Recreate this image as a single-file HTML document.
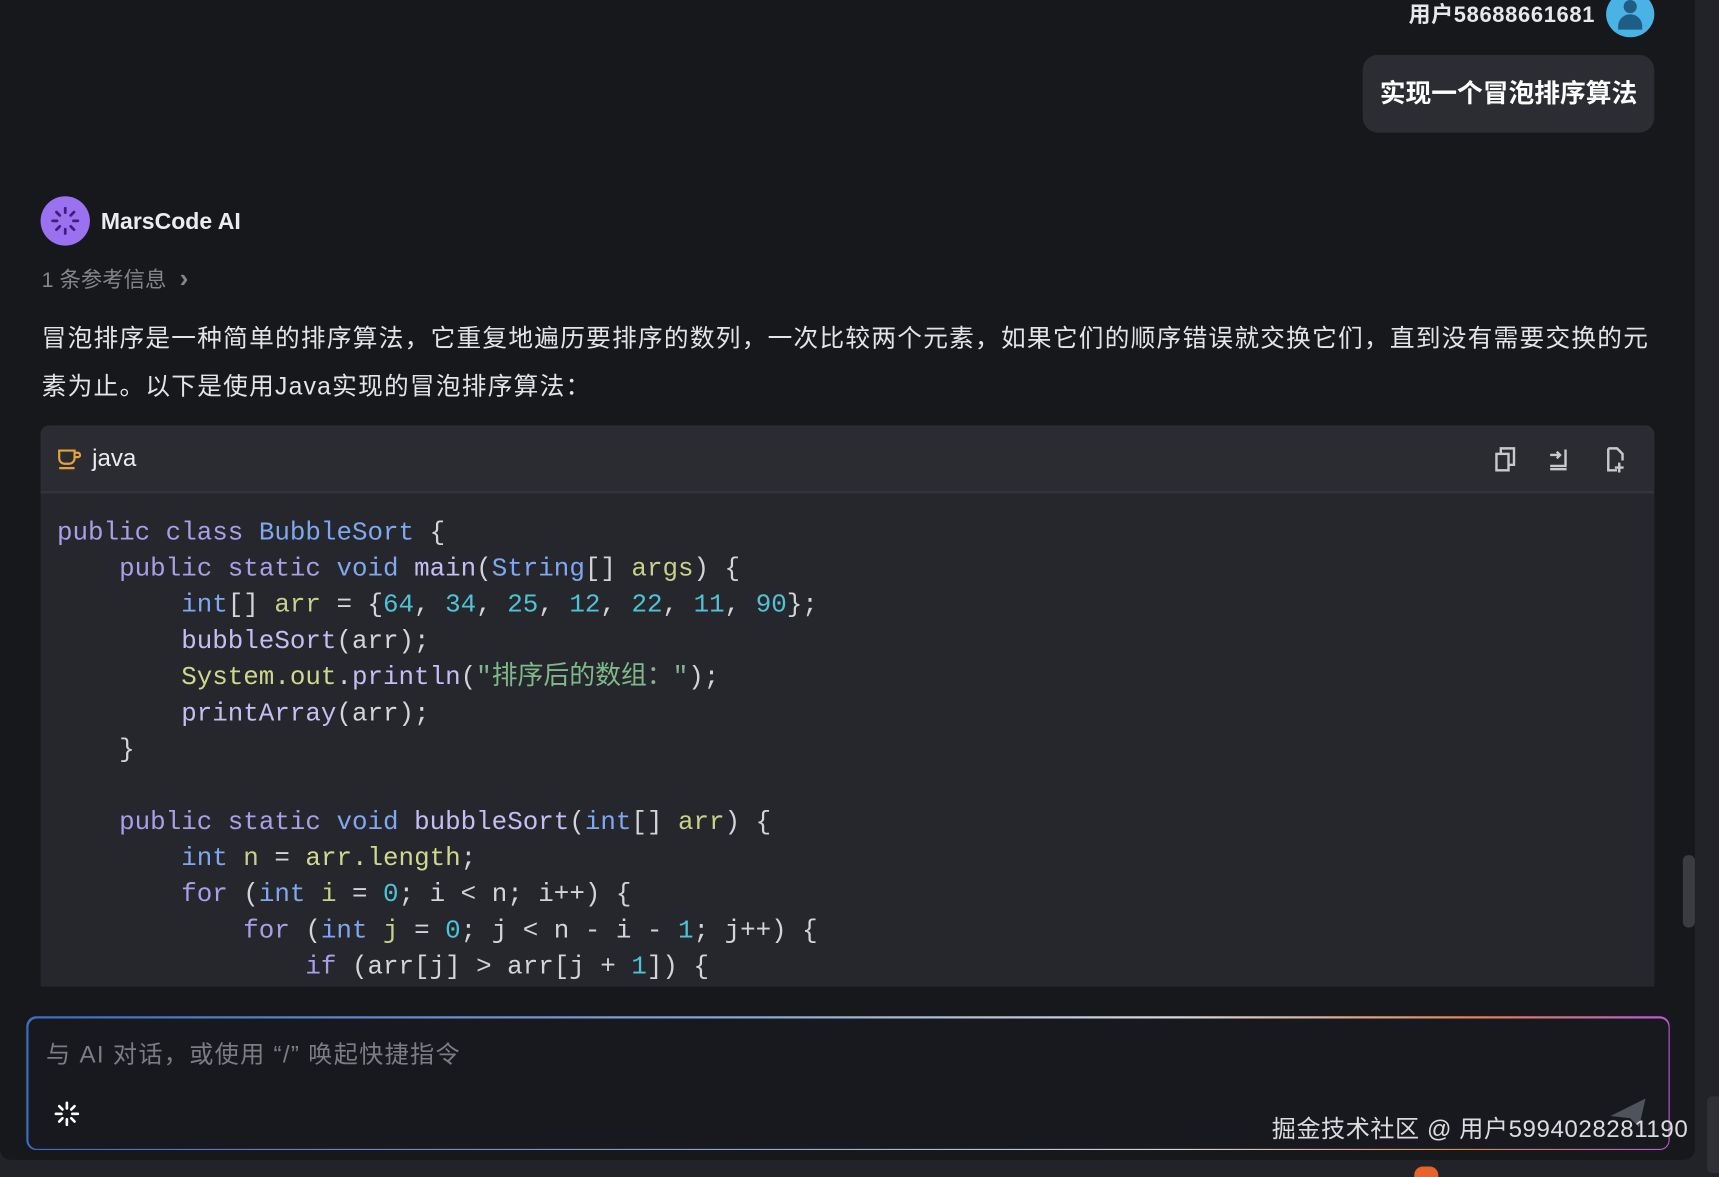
<!DOCTYPE html>
<html><head><meta charset="utf-8"><style>
*{margin:0;padding:0;box-sizing:border-box}
html,body{width:1719px;height:1173px;overflow:hidden;background:#222328}
#w{position:absolute;left:0;top:0;width:1568px;height:1070px;transform:scale(1.09630);transform-origin:0 0;font-family:"Liberation Sans","Noto Sans CJK SC",sans-serif}
.a{position:absolute}
#main{left:0;top:0;width:1546px;height:1058px;background:#17181c;border-radius:0 0 10px 10px}
.code{font-family:"Liberation Mono","Noto Sans CJK SC",monospace;font-size:23.6px;line-height:33px;color:#d4d4d8;white-space:pre}
.k{color:#a99ee8}.t{color:#7fa8f0}.f{color:#c6bdf2}.v{color:#c8d08a}.n{color:#4fc3d4}.s{color:#7fb98a}.y{color:#d0d88f}
</style></head><body><div id="w">
<div class="a" id="main"></div>
<div class="a" style="left:1535px;top:780px;width:11px;height:66px;background:#3a3c42;border-radius:5px"></div>
<div class="a" style="left:1557px;top:1000px;width:11px;height:70px;background:#2e3036;border-radius:5px 0 0 5px"></div>

<div class="a" style="right:113px;top:0;font-size:20px;font-weight:bold;color:#e8e8ea;line-height:28px;letter-spacing:0.6px">用户58688661681</div>
<div class="a" style="left:1465px;top:-8px;width:44px;height:42px;border-radius:50%;background:#4ab3e6;overflow:hidden">
<div class="a" style="left:16px;top:8px;width:12px;height:12px;border-radius:50%;background:#1f5d85"></div>
<div class="a" style="left:11px;top:21px;width:22px;height:14px;border-radius:11px 11px 0 0;background:#1f5d85"></div></div>

<div class="a" style="left:1243px;top:50px;width:266px;height:71px;background:#2b2d33;border-radius:14px;color:#fff;font-weight:bold;font-size:23.5px;line-height:71px;text-align:center">实现一个冒泡排序算法</div>

<div class="a" style="left:37px;top:179px;width:45px;height:45px;border-radius:50%;background:#9a72f0">
<svg width="45" height="45" viewBox="0 0 45 45" stroke="#3b1f7a" stroke-width="2.5" stroke-linecap="round"><path d="M22.5 11v4M22.5 30v4M11 22.5h4M30 22.5h4M14.5 14.5l3 3M27.5 27.5l3 3M30.5 14.5l-3 3M14.5 30.5l3-3"/></svg></div>
<div class="a" style="left:92px;top:190px;font-size:21px;font-weight:bold;color:#ececee;line-height:26px">MarsCode AI</div>
<div class="a" style="left:38px;top:242px;font-size:19.5px;color:#85868c;line-height:26px">1 条参考信息 <span style="font-size:24px;font-weight:bold">&nbsp;›</span></div>

<div class="a" style="left:38px;top:287px;width:1480px;font-size:22.5px;color:#e4e4e6;line-height:44px;letter-spacing:1.15px">冒泡排序是一种简单的排序算法，它重复地遍历要排序的数列，一次比较两个元素，如果它们的顺序错误就交换它们，直到没有需要交换的元素为止。以下是使用Java实现的冒泡排序算法：</div>

<div class="a" style="left:37px;top:388px;width:1472px;height:512px;background:#25272d;border-radius:8px 8px 0 0;overflow:hidden">
<div class="a" style="left:0;top:0;width:1472px;height:62px;background:#2a2c32;border-bottom:2px solid #33353b"></div>
<svg class="a" style="left:15px;top:20px" width="24" height="22" viewBox="0 0 24 22" fill="none" stroke="#e5a23a" stroke-width="2"><path d="M2 3h14v7a5 5 0 0 1-5 5H7a5 5 0 0 1-5-5z"/><path d="M16 5h3a2 2 0 0 1 0 4h-3"/><path d="M2 19h14"/></svg>
<div class="a" style="left:47px;top:16px;font-size:22px;color:#ececee;line-height:28px">java</div>
<svg class="a" style="left:1325px;top:18px" width="130" height="26" viewBox="0 0 130 26" fill="none" stroke="#c8c9ce" stroke-width="2.2"><rect x="3" y="8" width="11" height="15"/><path d="M7 8V3h12v15h-5"/><path d="M52 9h9M58 6l3 3-3 3"/><path d="M66 4v15H52M52 22h15"/><path d="M105 3h8l5 5v6M105 3v20h8M115 16v9M111 20.5h8"/></svg>
<div class="a code" style="left:15px;top:82px"><span class="k">public</span> <span class="k">class</span> <span class="t">BubbleSort</span> {
    <span class="k">public</span> <span class="k">static</span> <span class="t">void</span> <span class="f">main</span>(<span class="t">String</span>[] <span class="v">args</span>) {
        <span class="t">int</span>[] <span class="v">arr</span> = {<span class="n">64</span>, <span class="n">34</span>, <span class="n">25</span>, <span class="n">12</span>, <span class="n">22</span>, <span class="n">11</span>, <span class="n">90</span>};
        <span class="f">bubbleSort</span>(arr);
        <span class="y">System.out</span>.<span class="f">println</span>(<span class="s">"排序后的数组："</span>);
        <span class="f">printArray</span>(arr);
    }

    <span class="k">public</span> <span class="k">static</span> <span class="t">void</span> <span class="f">bubbleSort</span>(<span class="t">int</span>[] <span class="v">arr</span>) {
        <span class="t">int</span> <span class="v">n</span> = <span class="y">arr.length</span>;
        <span class="k">for</span> (<span class="t">int</span> <span class="v">i</span> = <span class="n">0</span>; i &lt; n; i++) {
            <span class="k">for</span> (<span class="t">int</span> <span class="v">j</span> = <span class="n">0</span>; j &lt; n - i - <span class="n">1</span>; j++) {
                <span class="k">if</span> (arr[j] &gt; arr[j + <span class="n">1</span>]) {</div>
</div>

<div class="a" style="left:24px;top:927px;width:1499px;height:122px;border-radius:9px;padding:1.5px;background:linear-gradient(90deg,#3d6cc0 0%,#8fa9d0 45%,#d8d8dc 70%,#d9875a 88%,#b65dd0 100%)">
<div style="width:100%;height:100%;background:#18191e;border-radius:8px"></div></div>
<div class="a" style="left:42px;top:947px;font-size:22px;color:#7c7d84;line-height:30px;letter-spacing:1.2px">与 AI 对话，或使用 “/” 唤起快捷指令</div>
<svg class="a" style="left:48px;top:1003px" width="26" height="26" viewBox="0 0 26 26" stroke="#fff" stroke-width="2.4" stroke-linecap="round"><path d="M13 3v5M13 18v5M3 13h5M18 13h5M6 6l3 3M17 17l3 3M20 6l-3 3M6 20l3-3"/></svg>
<svg class="a" style="left:1467px;top:1000px" width="36" height="30" viewBox="0 0 36 30"><path d="M2 18L34 2 28 28 20 20z" fill="#4f535c"/></svg>
<div class="a" style="left:1160px;top:1015px;font-size:22px;color:#dcdcde;line-height:30px;letter-spacing:0.5px">掘金技术社区 @ 用户5994028281190</div>
<div class="a" style="left:1290px;top:1064px;width:22px;height:10px;background:#e8622c;border-radius:8px 8px 0 0"></div>
</div></body></html>
